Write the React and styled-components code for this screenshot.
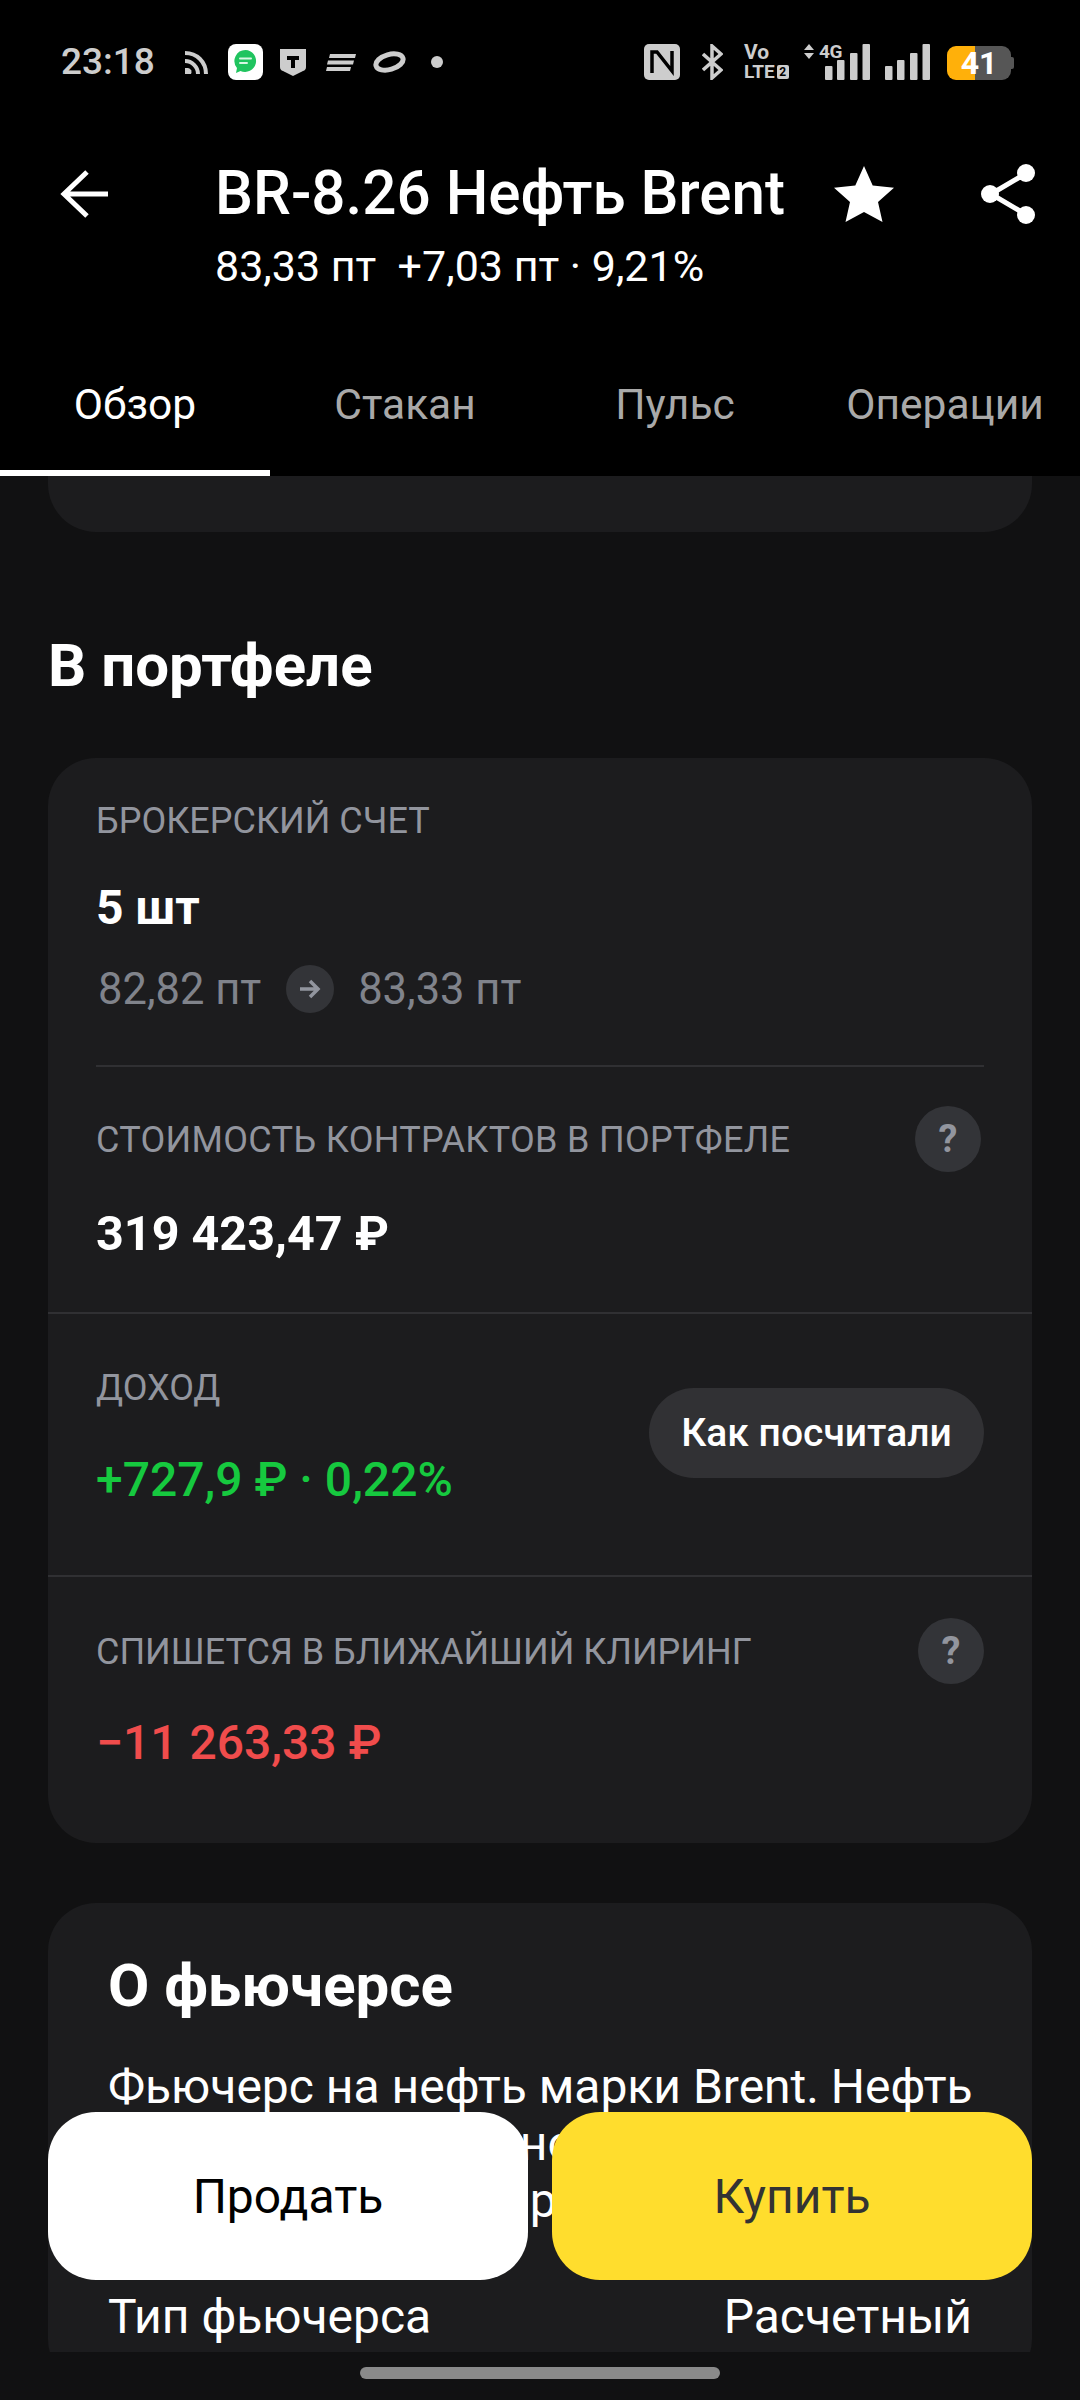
// App.jsx

import React from "react"
import styled, { createGlobalStyle } from "styled-components"

const GlobalStyle = createGlobalStyle`
  html, body {
    margin: 0;
    padding: 0;
    background: #111112;
  }
  * {
    box-sizing: border-box;
  }
`

const Screen = styled.div`
  position: relative;
  width: 1080px;
  height: 2400px;
  display: flex;
  flex-direction: column;
  overflow: hidden;
  background: #111112;
  color: #fff;
  font-family: Roboto, "Noto Sans", sans-serif;
`

const Header = styled.header`
  flex: none;
  background: #000;
`

const StatusBar = styled.div`
  height: 124px;
  padding: 0 67px 0 61px;
  display: flex;
  align-items: center;
  justify-content: space-between;
  color: #cdcdcd;
`

const StatusGroup = styled.div`
  display: flex;
  align-items: center;
`

const Clock = styled.span`
  width: 92px;
  font-size: 37px;
  font-weight: 500;
  line-height: 40px;
  white-space: nowrap;
`

const Glyph = styled.svg`
  display: block;
  flex: none;
  margin-left: ${(p) => p.$ml || 0}px;
`

const AppTile = styled.div`
  width: 35px;
  height: 36px;
  margin-left: 20px;
  border-radius: 8px;
  background: #fff;
  display: flex;
  align-items: center;
  justify-content: center;
`

const Volte = styled.div`
  width: 46px;
  height: 36px;
  margin-left: 21px;
  display: flex;
  flex-direction: column;
  justify-content: space-between;
  font-weight: 700;
  line-height: 17px;
`

const VolteLine = styled.div`
  display: flex;
  align-items: center;
  gap: 2px;
  font-size: ${(p) => p.$size}px;
`

const SimBadge = styled.span`
  width: 12px;
  height: 14px;
  border-radius: 2px;
  background: #cdcdcd;
  color: #000;
  font-size: 12px;
  line-height: 14px;
  text-align: center;
`

const Network = styled.div`
  position: relative;
  width: 66px;
  height: 36px;
  margin-left: 14px;
`

const NetworkType = styled.span`
  position: absolute;
  left: 15px;
  top: 0;
  font-size: 19px;
  font-weight: 700;
  line-height: 16px;
  letter-spacing: -0.5px;
`

const Battery = styled.div`
  position: relative;
  width: 64px;
  height: 34px;
  margin: 1px 2px 0 17px;
  border-radius: 9px;
  background: linear-gradient(to right, #ffb00a 28px, #565656 28px);
  color: #fff;
  font-size: 32px;
  font-weight: 700;
  line-height: 35px;
  text-align: center;
  &::after {
    content: "";
    position: absolute;
    right: -3px;
    top: 11px;
    width: 3px;
    height: 12px;
    border-radius: 0 2px 2px 0;
    background: #565656;
  }
`

const TopBar = styled.div`
  height: 221px;
  padding-right: 45px;
  display: flex;
  align-items: flex-start;
`

const BackIcon = styled.svg`
  flex: none;
  margin: 46px 0 0 60px;
`

const TitleBlock = styled.div`
  flex: 1;
  margin: 35px 0 0 107px;
`

const Title = styled.h1`
  margin: 0;
  font-size: 60.2px;
  font-weight: 500;
  line-height: 70px;
  white-space: nowrap;
`

const Quote = styled.div`
  margin-top: 12px;
  font-size: 43px;
  line-height: 50px;
  white-space: pre;
`

const StarIcon = styled.svg`
  flex: none;
  margin-top: 42px;
`

const ShareIcon = styled.svg`
  flex: none;
  margin: 40px 0 0 87px;
`

const Tabs = styled.nav`
  display: grid;
  grid-template-columns: repeat(4, 270px);
`

const Tab = styled.div`
  height: 131px;
  padding-top: 30px;
  border-bottom: 6px solid ${(p) => (p.$active ? "#fff" : "transparent")};
  color: ${(p) => (p.$active ? "#fff" : "#a9a9a9")};
  font-size: 42.5px;
  line-height: 60px;
  text-align: center;
  white-space: nowrap;
`

const Content = styled.main`
  flex: 1;
  min-height: 0;
  padding: 0 48px;
  overflow: hidden;
`

const StubCard = styled.div`
  height: 56px;
  border-radius: 0 0 48px 48px;
  background: #1c1c1e;
`

const SectionTitle = styled.h2`
  margin: 98px 0 56px;
  font-size: 60px;
  font-weight: 700;
  line-height: 72px;
`

const Card = styled.section`
  margin-bottom: 60px;
  border-radius: 48px;
  background: #1c1c1e;
  overflow: hidden;
`

const CardSection = styled.div`
  padding: 0 48px;
  border-top: ${(p) => (p.$divided ? "2px solid #303033" : "none")};
`

const Inset = styled.div`
  padding: ${(p) => p.$pad};
  border-bottom: ${(p) => (p.$divided ? "2px solid #303033" : "none")};
`

const Label = styled.div`
  height: 44px;
  color: #92959e;
  font-size: 36px;
  letter-spacing: ${(p) => p.$spacing || 0}px;
  line-height: 46px;
  white-space: nowrap;
`

const Amount = styled.div`
  height: 56px;
  margin-top: ${(p) => p.$mt}px;
  color: ${(p) => p.$color || "#fff"};
  font-size: ${(p) => p.$size || 48}px;
  font-weight: ${(p) => p.$weight || 500};
  line-height: 58px;
  white-space: nowrap;
`

const PriceRow = styled.div`
  height: 48px;
  margin-top: 30px;
  display: flex;
  align-items: center;
  color: #80838b;
  font-size: 43.5px;
  white-space: nowrap;
`

const PriceValue = styled.span`
  margin-left: 2px;
`

const ArrowBubble = styled.span`
  width: 48px;
  height: 48px;
  margin: 0 22px 0 25px;
  border-radius: 50%;
  background: #333438;
  display: flex;
  align-items: center;
  justify-content: center;
`

const LabelRow = styled.div`
  height: 66px;
  margin-top: ${(p) => p.$mt}px;
  display: flex;
  align-items: center;
  justify-content: space-between;
`

const HelpButton = styled.span`
  width: 66px;
  height: 66px;
  margin-right: ${(p) => p.$mr || 0}px;
  border-radius: 50%;
  background: #333438;
  color: #92959e;
  font-size: 38px;
  font-weight: 700;
  line-height: 66px;
  text-align: center;
`

const IncomeRow = styled.div`
  display: flex;
  justify-content: space-between;
  align-items: flex-start;
  padding: 51px 0 68px;
`

const Pill = styled.span`
  width: 335px;
  height: 90px;
  margin-top: 23px;
  border-radius: 45px;
  background: #313134;
  font-size: 39px;
  font-weight: 500;
  line-height: 90px;
  text-align: center;
  white-space: nowrap;
`

const AboutBody = styled.div`
  padding: 47px 60px 40px;
`

const AboutTitle = styled.h3`
  margin: 0;
  font-size: 60px;
  font-weight: 700;
  line-height: 72px;
`

const Description = styled.p`
  margin: 36px 0 0;
  font-size: 48px;
  line-height: 57px;
  white-space: nowrap;
`

const FactRow = styled.div`
  margin-top: 58px;
  display: flex;
  justify-content: space-between;
  font-size: 48px;
  line-height: 60px;
`

const Actions = styled.div`
  position: absolute;
  left: 48px;
  right: 48px;
  top: 2112px;
  display: grid;
  grid-template-columns: 1fr 1fr;
  gap: 24px;
`

const ActionButton = styled.button`
  height: 168px;
  border: 0;
  border-radius: 48px;
  background: ${(p) => p.$bg};
  color: ${(p) => p.$fg};
  font-family: inherit;
  font-size: 48px;
`

const HomeArea = styled.div`
  flex: none;
  height: 48px;
  padding-top: 15px;
  display: flex;
  justify-content: center;
`

const HomeBar = styled.div`
  width: 360px;
  height: 12px;
  border-radius: 6px;
  background: #8a8a8a;
`

const Signal = ({ ml, arrows }) => {
  const x = arrows ? 21 : 0
  return (
    <Glyph $ml={ml} width={x + 45} height="36" viewBox={`0 0 ${x + 45} 36`} fill="#cdcdcd">
      {arrows && <path d="M0 6 5 0l5 6zM0 9h10l-5 6z" />}
      <rect x={x} y="22" width="7.5" height="14" rx="1" />
      <rect x={x + 12} y="16" width="7.5" height="20" rx="1" />
      <rect x={x + 25} y="9" width="7.5" height="27" rx="1" />
      <rect x={x + 37.5} y="0" width="7.5" height="36" rx="1" />
    </Glyph>
  )
}

const StatusIcons = () => (
  <StatusGroup>
    <Clock>23:18</Clock>
    <Glyph $ml={32} width="23" height="23" viewBox="0 0 23 23" fill="none" stroke="#cdcdcd" strokeWidth="4">
      <path d="M0 2c12 0 21 9 21 21" />
      <path d="M0 10c7 0 13 6 13 13" />
      <path d="M0 17h3a4 4 0 0 1 3 6H0z" fill="#cdcdcd" stroke="none" />
    </Glyph>
    <AppTile>
      <svg width="23" height="24" viewBox="0 0 23 24">
        <path d="M11.5 0a11 11 0 1 1-5 21L2 23l1-5A11 11 0 0 1 11.5 0z" fill="#20c45f" />
        <path d="M6 8.5h11M6 13h7" stroke="#d8f7e3" strokeWidth="2" strokeLinecap="round" />
      </svg>
    </AppTile>
    <Glyph $ml={17} width="26" height="27" viewBox="0 0 26 27">
      <path d="M0 0h26v18q0 3-3 4l-10 5-10-5q-3-1-3-4z" fill="#cdcdcd" />
      <path d="M7 7h12v4h-4v8h-4v-8H7z" fill="#000" />
    </Glyph>
    <Glyph $ml={20} width="30" height="17" viewBox="0 0 30 17" fill="#cdcdcd">
      <path d="M4 0h26l-1 4H3zM2 6.500h26l-1 4H1zM1 13h24l-1 4H0z" />
    </Glyph>
    <Glyph $ml={17} width="33" height="22" viewBox="0 0 33 22" fill="none">
      <ellipse cx="16.500" cy="11" rx="14" ry="7.500" transform="rotate(-16 16.500 11)" stroke="#cdcdcd" strokeWidth="5" />
    </Glyph>
    <Glyph $ml={25} width="12" height="12" viewBox="0 0 12 12" fill="#cdcdcd">
      <circle cx="6" cy="6" r="6" />
    </Glyph>
  </StatusGroup>
)

const SystemIcons = () => (
  <StatusGroup>
    <Glyph width="36" height="36" viewBox="0 0 36 36">
      <rect width="36" height="36" rx="5" fill="#cdcdcd" />
      <path d="M8 29V8h5l15 19V7" fill="none" stroke="#000" strokeWidth="3.500" />
    </Glyph>
    <Glyph $ml={22} width="21" height="36" viewBox="0 0 21 36" fill="none" stroke="#cdcdcd" strokeWidth="3.500">
      <path d="M1 10 19 26 10 34V2l9 8L1 26" />
    </Glyph>
    <Volte>
      <VolteLine $size={21}>Vo</VolteLine>
      <VolteLine $size={19}>
        LTE<SimBadge>2</SimBadge>
      </VolteLine>
    </Volte>
    <Network>
      <Signal arrows />
      <NetworkType>4G</NetworkType>
    </Network>
    <Signal ml={15} />
    <Battery>41</Battery>
  </StatusGroup>
)

const App = () => {
  return (
    <Screen>
      <GlobalStyle />
      <Header>
        <StatusBar>
          <StatusIcons />
          <SystemIcons />
        </StatusBar>
        <TopBar>
          <BackIcon width="48" height="48" viewBox="0 0 48 48" fill="none" stroke="#fff" strokeWidth="5">
            <path d="M48 24H4M27 2 4 24l23 22" />
          </BackIcon>
          <TitleBlock>
            <Title>BR-8.26 Нефть Brent</Title>
            <Quote>83,33 пт  +7,03 пт · 9,21%</Quote>
          </TitleBlock>
          <StarIcon width="60" height="56" viewBox="0 0 60 56" fill="#fff">
            <path d="M30 0l8.700 19.500L60 21.800 44 36l4.500 20L30 46 11.500 56 16 36 0 21.800l21.300-2.300z" />
          </StarIcon>
          <ShareIcon width="54" height="60" viewBox="0 0 54 60">
            <path d="M44 10 10 30l34 20" fill="none" stroke="#fff" strokeWidth="5" />
            <circle cx="45" cy="9" r="9" fill="#fff" />
            <circle cx="9" cy="30" r="9" fill="#fff" />
            <circle cx="45" cy="51" r="9" fill="#fff" />
          </ShareIcon>
        </TopBar>
        <Tabs>
          <Tab $active>Обзор</Tab>
          <Tab>Стакан</Tab>
          <Tab>Пульс</Tab>
          <Tab>Операции</Tab>
        </Tabs>
      </Header>

      <Content>
        <StubCard />
        <SectionTitle>В портфеле</SectionTitle>
        <Card>
          <CardSection>
            <Inset $pad="40px 0 52px" $divided>
              <Label>БРОКЕРСКИЙ СЧЕТ</Label>
              <Amount $mt={37} $weight={700}>5 шт</Amount>
              <PriceRow>
                <PriceValue>82,82 пт</PriceValue>
                <ArrowBubble>
                  <svg width="22" height="20" viewBox="0 0 22 20" fill="none" stroke="#92959e" strokeWidth="3.500">
                    <path d="M1 10h18M11 2l8 8-8 8" />
                  </svg>
                </ArrowBubble>
                <PriceValue>83,33 пт</PriceValue>
              </PriceRow>
            </Inset>
            <Inset $pad="0 0 51px">
              <LabelRow $mt={39}>
                <Label $spacing={0.3}>СТОИМОСТЬ КОНТРАКТОВ В ПОРТФЕЛЕ</Label>
                <HelpButton $mr={3}>?</HelpButton>
              </LabelRow>
              <Amount $mt={33} $weight={700} $size={48.5}>319 423,47 ₽</Amount>
            </Inset>
          </CardSection>
          <CardSection $divided>
            <IncomeRow>
              <div>
                <Label>ДОХОД</Label>
                <Amount $mt={42} $color="#16c93f">+727,9 ₽ · 0,22%</Amount>
              </div>
              <Pill>Как посчитали</Pill>
            </IncomeRow>
          </CardSection>
          <CardSection $divided>
            <Inset $pad="0 0 73px">
              <LabelRow $mt={41}>
                <Label>СПИШЕТСЯ В БЛИЖАЙШИЙ КЛИРИНГ</Label>
                <HelpButton>?</HelpButton>
              </LabelRow>
              <Amount $mt={30} $color="#f04c4c">−11 263,33 ₽</Amount>
            </Inset>
          </CardSection>
        </Card>
        <Card>
          <AboutBody>
            <AboutTitle>О фьючерсе</AboutTitle>
            <Description>
              Фьючерс на нефть марки Brent. Нефть
              <br />
              этой марки, основной эталон
              <br />
              цены на другие марки
            </Description>
            <FactRow>
              <span>Тип фьючерса</span>
              <span>Расчетный</span>
            </FactRow>
          </AboutBody>
        </Card>
      </Content>

      <HomeArea>
        <HomeBar />
      </HomeArea>

      <Actions>
        <ActionButton $bg="#fff" $fg="#000">Продать</ActionButton>
        <ActionButton $bg="#ffdd2d" $fg="#333">Купить</ActionButton>
      </Actions>
    </Screen>
  )
}

export default App
